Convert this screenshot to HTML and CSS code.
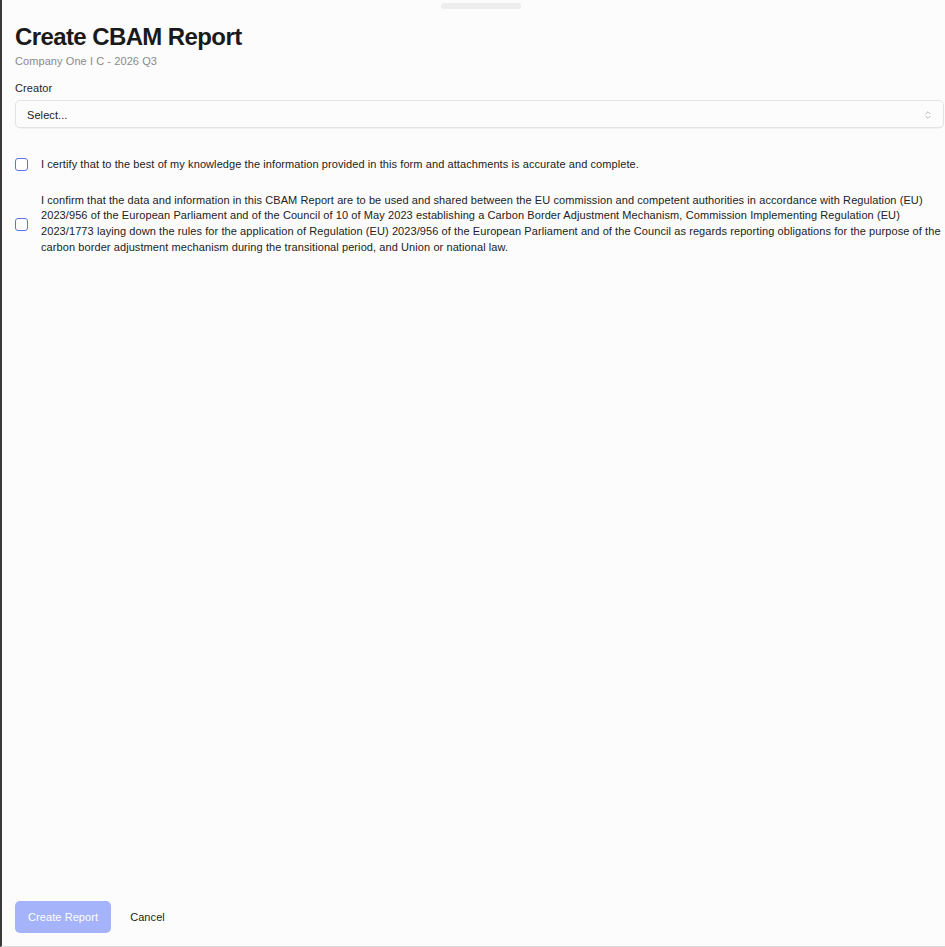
FILE: index.html
```html
<!DOCTYPE html>
<html lang="en">
<head>
<meta charset="utf-8">
<title>Create CBAM Report</title>
<link rel="stylesheet" href="styles.css">
</head>
<body>
<div class="sheet">
  <div class="handle"></div>
  <header class="head">
    <h1 class="title">Create CBAM Report</h1>
    <p class="subtitle">Company One I C - 2026 Q3</p>
  </header>
  <div class="field">
    <label class="label">Creator</label>
    <div class="select">
      <span class="select-value">Select...</span>
      <svg class="chev" viewBox="0 0 24 24" width="10" height="10" fill="none" stroke="currentColor" stroke-width="2" stroke-linecap="round" stroke-linejoin="round"><path d="m7 15 5 5 5-5"/><path d="m7 9 5-5 5 5"/></svg>
    </div>
  </div>
  <div class="checks">
    <label class="check-row">
      <span class="box"></span>
      <span class="check-text">I certify that to the best of my knowledge the information provided in this form and attachments is accurate and complete.</span>
    </label>
    <label class="check-row">
      <span class="box"></span>
      <span class="check-text">I confirm that the data and information in this CBAM Report are to be used and shared between the EU commission and competent authorities in accordance with Regulation (EU) 2023/956 of the European Parliament and of the Council of 10 of May 2023 establishing a Carbon Border Adjustment Mechanism, Commission Implementing Regulation (EU) 2023/1773 laying down the rules for the application of Regulation (EU) 2023/956 of the European Parliament and of the Council as regards reporting obligations for the purpose of the carbon border adjustment mechanism during the transitional period, and Union or national law.</span>
    </label>
  </div>
  <footer class="actions">
    <button class="btn btn-primary" disabled>Create Report</button>
    <button class="btn btn-ghost">Cancel</button>
  </footer>
</div>
</body>
</html>
```
FILE: styles.css
```css
html, body {
  margin: 0;
  padding: 0;
  background: #fcfcfc;
}
body {
  font-family: "Liberation Sans", Arial, Helvetica, sans-serif;
  color: #1f1f1f;
}
.sheet {
  box-sizing: border-box;
  height: 947px;
  display: flex;
  flex-direction: column;
  border-left: 2px solid #3a3a3a;
  border-bottom: 1px solid #dcdcdc;
  padding: 0 1px 13px 13px;
  background: #fcfcfc;
}
.handle {
  width: 80px;
  height: 6px;
  border-radius: 3px;
  background: #ededed;
  margin: 3px 0 0 426px;
}
.head {
  margin-top: 12px;
}
.title {
  margin: 0;
  font-size: 24px;
  line-height: 32px;
  font-weight: 700;
  letter-spacing: -0.025em;
  color: #1a1a1a;
}
.subtitle {
  margin: 0;
  font-size: 11px;
  line-height: 16px;
  color: #8a8a8a;
  letter-spacing: 0.08px;
}
.field {
  margin-top: 11px;
  display: flex;
  flex-direction: column;
  gap: 4px;
}
.label {
  font-size: 11px;
  line-height: 16px;
  color: #1f1f1f;
  letter-spacing: 0.08px;
}
.select {
  box-sizing: border-box;
  height: 28px;
  display: flex;
  align-items: center;
  justify-content: space-between;
  padding: 1px 10px 0 11px;
  border: 1px solid #e3e3e3;
  border-radius: 5px;
  background: #fcfcfc;
  box-shadow: 0 1px 1px rgba(0,0,0,0.04);
}
.select-value {
  font-size: 11px;
  color: #222;
  letter-spacing: 0.08px;
}
.chev {
  color: #a8a8a8;
}
.checks {
  margin-top: 29px;
  display: flex;
  flex-direction: column;
  gap: 20px;
}
.check-row {
  display: flex;
  align-items: center;
  gap: 13px;
}
.box {
  flex: none;
  box-sizing: border-box;
  width: 13px;
  height: 13px;
  border: 1px solid #5b73f2;
  border-radius: 3px;
  background: #fff;
}
.check-text {
  font-size: 11px;
  line-height: 15.67px;
  color: #222;
  letter-spacing: 0.085px;
}
.actions {
  margin-top: auto;
  display: flex;
  align-items: center;
  gap: 7px;
}
.btn {
  font-family: inherit;
  font-size: 11px;
  height: 32px;
  border: 0;
  border-radius: 5px;
  padding: 0 13px;
  cursor: pointer;
  letter-spacing: 0.08px;
}
.btn-primary {
  background: #a4b3fa;
  color: #fff;
}
.btn-ghost {
  background: transparent;
  color: #1f1f1f;
  padding: 0 12px;
}
```
